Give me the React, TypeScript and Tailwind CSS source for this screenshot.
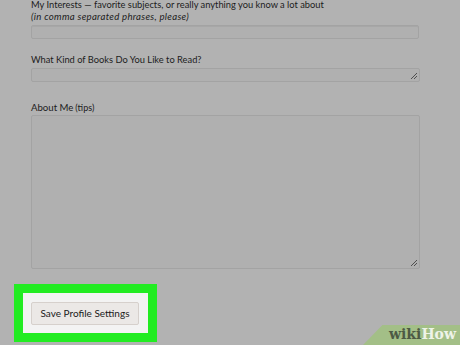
import React from "react";

export default function App() {
  return (
    <div
      className="relative w-[460px] h-[345px] overflow-hidden bg-[#b2b2b2] text-[#1c1c1c]"
      style={{ fontFamily: "Lato, 'Open Sans', sans-serif" }}
    >
      <div className="flex flex-col pl-[31px] w-[420px]">
        <div className="mt-[-1px] h-[11px] text-[9.3px] leading-[11px] whitespace-nowrap">
          My Interests — favorite subjects, or really anything you know a lot about
        </div>
        <div className="mt-[2px] h-[10px] text-[9.6px] leading-[10px] italic whitespace-nowrap tracking-[0.3px]">
          (in comma separated phrases, please)
        </div>
        <div className="mt-[3px] h-[14px] w-[388px] border border-[#a3a3a3] bg-[#b0b0b0] rounded-[2px] shadow-[inset_0_1px_0_rgba(0,0,0,0.05)]" />
        <div className="mt-[15px] h-[11px] text-[9.3px] leading-[11px] whitespace-nowrap">
          What Kind of Books Do You Like to Read?
        </div>
        <div className="mt-[3px] relative h-[14px] w-[389px] border border-[#a3a3a3] bg-[#b0b0b0] rounded-[2px]">
          <Grip />
        </div>
        <div className="mt-[20px] h-[11px] flex items-baseline gap-[2px] whitespace-nowrap">
          <span className="text-[9.6px] leading-[11px]">About Me</span>
          <span className="text-[9px] leading-[11px]">(tips)</span>
        </div>
        <div className="mt-[2px] relative h-[154px] w-[389px] border border-[#a3a3a3] bg-[#b0b0b0] rounded-[2px]">
          <Grip />
        </div>
      </div>
      <div className="ml-[14px] mt-[15px] w-[143px] h-[58px] bg-[#22ec22] p-[9px]">
        <div className="w-full h-full bg-[#f3f3f3] flex items-center pl-[8px]">
          <div className="w-[108px] h-[23px] border border-[#d6d0cc] rounded-[2px] bg-[#ebe8e6] flex items-center justify-center text-[10px] leading-[12px] text-[#1a1a1a] whitespace-nowrap">
            Save Profile Settings
          </div>
        </div>
      </div>
      <div className="absolute right-0 bottom-0 w-[97px] h-[20px] bg-[#a3bf87] [clip-path:polygon(20%_0,100%_0,100%_100%,0_100%)]" />
      <div
        className="absolute right-[4px] bottom-[3px] text-[14px] font-bold leading-[16px] whitespace-nowrap"
        style={{ fontFamily: "'DejaVu Serif', 'Liberation Serif', serif" }}
      >
        <span className="text-[#4d5a44]">wiki</span>
        <span className="text-[#eef3e8]">How</span>
      </div>
    </div>
  );
}

function Grip() {
  return (
    <svg className="absolute right-[1px] bottom-[1px]" width="8" height="8" viewBox="0 0 8 8">
      <line x1="1" y1="7" x2="7" y2="1" stroke="#444" strokeWidth="0.9" />
      <line x1="4" y1="7" x2="7" y2="4" stroke="#444" strokeWidth="0.9" />
    </svg>
  );
}
